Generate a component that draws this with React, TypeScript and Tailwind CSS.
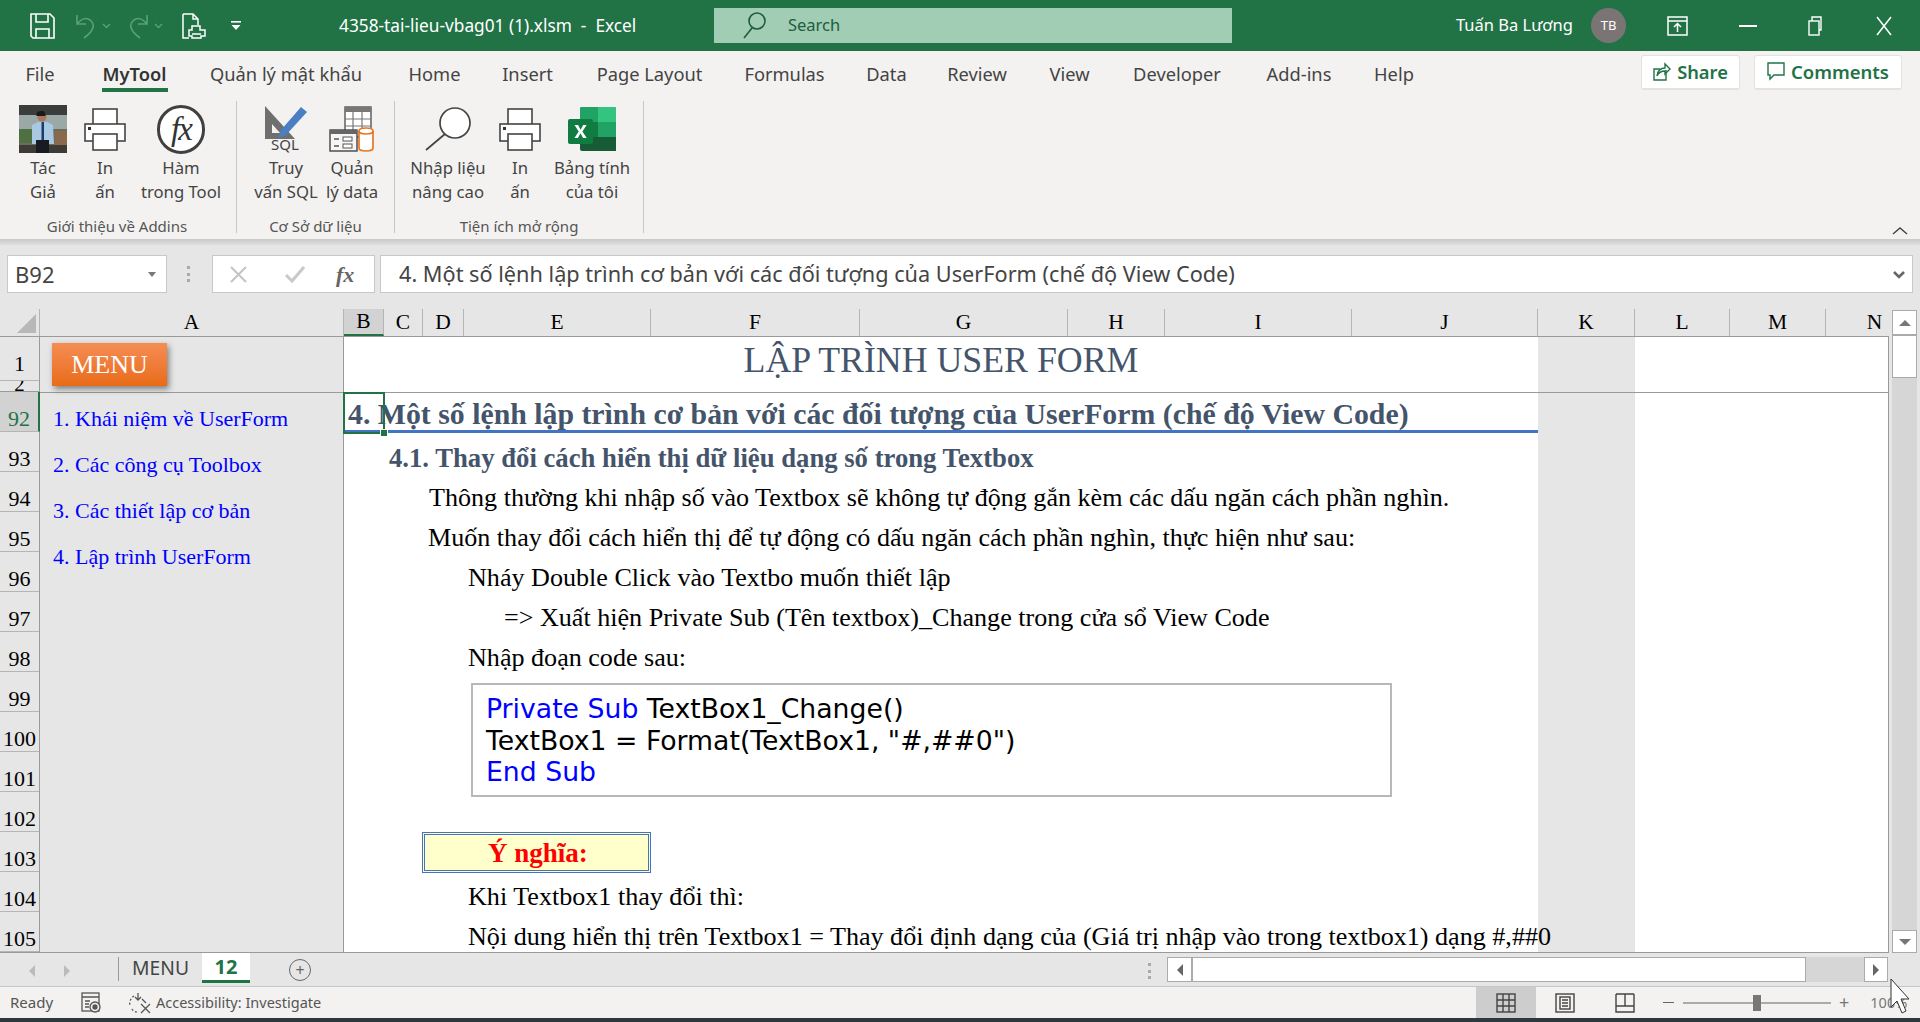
import React from "react";

const ui = "font-['Noto_Sans',sans-serif]";
const serif = "font-['Liberation_Serif',serif]";

function Save() {
  return (
    <svg width="25" height="26" viewBox="0 0 25 26" fill="none" stroke="#fff" strokeWidth="1.6">
      <path d="M1 1h19l4 4v20H3l-2-2z" />
      <path d="M6 1v8h12V1M6 25v-9h13v9" />
    </svg>
  );
}
function Undo({ flip }: { flip?: boolean }) {
  return (
    <svg width="22" height="26" viewBox="0 0 22 26" fill="none" stroke="#5c9f7d" strokeWidth="1.6" style={flip ? { transform: "scaleX(-1)" } : undefined}>
      <path d="M2 2v9h9M2 11c4-5 9-7 13-4 5 4 5 10-6 18" />
    </svg>
  );
}
function Chev() {
  return (
    <svg width="9" height="6" viewBox="0 0 9 6" fill="none" stroke="#5c9f7d" strokeWidth="1.3">
      <path d="M1 1l3.5 3.5L8 1" />
    </svg>
  );
}
function PrintPreview() {
  return (
    <svg width="24" height="26" viewBox="0 0 24 26" fill="none" stroke="#fff" strokeWidth="1.5">
      <path d="M1 1h10l5 5v6M1 1v24h6M11 1v5h5" />
      <path d="M10 13h8v4h5v6h-4v2h-9v-2H7v-6h3z" fill="#217346" />
      <path d="M10 21h9" />
    </svg>
  );
}
function QuickMore() {
  return (
    <svg width="12" height="12" viewBox="0 0 12 12" fill="#fff">
      <rect x="1" y="1" width="10" height="1.6" />
      <path d="M1.5 5h9L6 10z" />
    </svg>
  );
}
function SearchIcon({ color }: { color: string }) {
  return (
    <svg width="25" height="27" viewBox="0 0 25 27" fill="none" stroke={color} strokeWidth="1.6">
      <circle cx="15" cy="9" r="8" />
      <path d="M10 16L2 26" />
    </svg>
  );
}
function Printer() {
  return (
    <svg width="42" height="43" viewBox="0 0 42 43" fill="#fff" stroke="#444" strokeWidth="1.6">
      <rect x="9" y="1" width="24" height="16" />
      <rect x="1" y="16" width="40" height="17" />
      <rect x="9" y="26" width="24" height="16" />
      <rect x="4" y="19" width="3" height="3" fill="#333" stroke="none" />
    </svg>
  );
}
function Photo() {
  return (
    <svg width="48" height="48" viewBox="0 0 48 48">
      <rect width="48" height="48" fill="#6d6a5e" />
      <rect width="48" height="10" fill="#3a3d3c" />
      <rect y="10" width="48" height="14" fill="#9aa9a5" />
      <rect x="0" y="24" width="14" height="14" fill="#4f7040" />
      <rect x="36" y="26" width="12" height="14" fill="#8a6a4a" />
      <rect y="40" width="48" height="8" fill="#3e3a36" />
      <circle cx="23" cy="12" r="4.5" fill="#a9785c" />
      <path d="M22 6c-4 0-5 3-4.500 5h9c.5-3-1-5-4.500-5z" fill="#1c1a18" />
      <path d="M13 20l6-3h9l6 3 1 19h-5v-3H18v3h-5z" fill="#a9c9e2" />
      <rect x="17" y="35" width="13" height="13" fill="#1a1a22" />
      <rect x="22.500" y="17" width="2.500" height="18" fill="#1c3a6a" />
    </svg>
  );
}
function Fx() {
  return (
    <div className="w-[48px] h-[49px] rounded-full border-[3px] border-[#404040] bg-white flex items-center justify-center">
      <span className={`${serif} italic text-[33px] leading-none text-[#333] tracking-[-2px]`}>fx</span>
    </div>
  );
}
function Sql() {
  return (
    <div className="relative w-[44px] h-[46px]">
      <svg width="44" height="34" viewBox="0 0 44 34" className="absolute left-0 top-0">
        <path d="M1 0l30 33H1z" fill="#6f6f6f" />
        <path d="M8 18l8 9H8z" fill="#f3f2f1" />
        <path d="M37 1l6 5-21 23-8 3 3-8z" fill="#4a7fc4" />
      </svg>
      <span className={`${ui} absolute left-[7px] top-[31px] text-[15px] leading-[15px] text-[#444]`}>SQL</span>
    </div>
  );
}
function DataIcon() {
  return (
    <svg width="46" height="46" viewBox="0 0 46 46" fill="none">
      <rect x="16" y="1" width="26" height="30" fill="#fff" stroke="#555" strokeWidth="1.4" />
      <rect x="16" y="1" width="26" height="5" fill="#777" />
      <path d="M24 6v25M33 6v25M16 13h26M16 20h26" stroke="#777" strokeWidth="1.2" />
      <rect x="1" y="24" width="27" height="21" fill="#f6f6f6" stroke="#444" strokeWidth="1.4" />
      <rect x="1" y="24" width="27" height="4" fill="#666" />
      <path d="M5 33h5M5 40h5" stroke="#555" strokeWidth="1.4" />
      <rect x="14" y="31" width="9" height="4" fill="#fff" stroke="#555" />
      <rect x="14" y="38" width="9" height="4" fill="#fff" stroke="#555" />
      <path d="M30 25c0-4 14-4 14 0v17c0 4-14 4-14 0z" fill="#fff" stroke="#e8761f" strokeWidth="1.7" />
      <path d="M30 25c0 4 14 4 14 0" stroke="#e8761f" strokeWidth="1.7" />
    </svg>
  );
}
function Magnifier() {
  return (
    <svg width="46" height="44" viewBox="0 0 46 44" fill="#fff" stroke="#444" strokeWidth="1.7">
      <circle cx="30" cy="16" r="15" />
      <path d="M20 27L1 43" fill="none" />
    </svg>
  );
}
function ExcelLogo() {
  return (
    <svg width="48" height="44" viewBox="0 0 48 44">
      <rect x="12" y="0" width="36" height="44" rx="2" fill="#185c37" />
      <path d="M12 2a2 2 0 012-2h16v15H12z" fill="#21a366" />
      <path d="M30 0h16a2 2 0 012 2v13H30z" fill="#33c481" />
      <rect x="12" y="15" width="18" height="15" fill="#107c41" />
      <rect x="30" y="15" width="18" height="15" fill="#21a366" />
      <rect x="30" y="30" width="18" height="14" fill="#185c37" />
      <rect x="0" y="12" width="25" height="25" rx="2" fill="#107c41" />
      <path d="M6.500 18h3.600l2.500 4.700 2.600-4.700h3.400l-4.200 6.500 4.300 6.500h-3.600l-2.600-4.800-2.600 4.800H6.400l4.300-6.500z" fill="#fff" />
    </svg>
  );
}
function ShareIcon() {
  return (
    <svg width="18" height="20" viewBox="0 0 18 20" fill="none" stroke="#217346" strokeWidth="1.4">
      <path d="M13 8v10H1V7h6" />
      <path d="M4 14c0-5 4-8 8-8V2l5 5-5 5V9c-3 0-6 1-8 5z" />
    </svg>
  );
}
function CommentIcon() {
  return (
    <svg width="18" height="20" viewBox="0 0 18 20" fill="none" stroke="#217346" strokeWidth="1.4">
      <path d="M1 1h16v12H7l-4 4v-4H1z" />
    </svg>
  );
}

function RibbonItem({ w, icon, l1, l2 }: { w: string; icon: React.ReactNode; l1: string; l2: string }) {
  return (
    <div className={`${w} flex flex-col items-center shrink-0`}>
      <div className="h-[54px] flex items-center justify-center">{icon}</div>
      <div className="text-[16.7px] leading-[24px] text-[#444] whitespace-nowrap text-center">{l1}</div>
      <div className="text-[16.7px] leading-[24px] text-[#444] whitespace-nowrap text-center">{l2}</div>
    </div>
  );
}

const tabs = [
  { t: "File", c: "w-[30px] ml-[25px] text-[#444]" },
  { t: "MyTool", c: "w-[65px] ml-[47px] text-[#333] font-semibold" },
  { t: "Quản lý mật khẩu", c: "w-[152px] ml-[43px] text-[#444]" },
  { t: "Home", c: "w-[53px] ml-[46px] text-[#444]" },
  { t: "Insert", c: "w-[47px] ml-[43px] text-[#444]" },
  { t: "Page Layout", c: "w-[105px] ml-[46px] text-[#444]" },
  { t: "Formulas", c: "w-[81px] ml-[42px] text-[#444]" },
  { t: "Data", c: "w-[41px] ml-[41px] text-[#444]" },
  { t: "Review", c: "w-[60px] ml-[40px] text-[#444]" },
  { t: "View", c: "w-[41px] ml-[42px] text-[#444]" },
  { t: "Developer", c: "w-[90px] ml-[42px] text-[#444]" },
  { t: "Add-ins", c: "w-[70px] ml-[42px] text-[#444]" },
  { t: "Help", c: "w-[40px] ml-[40px] text-[#444]" },
];

const cols = [
  { l: "A", c: "w-[304px] border-r" },
  { l: "B", c: "w-[40px] border-r bg-[#d2d2d2] text-[#217346] border-b-2 border-b-[#217346]" },
  { l: "C", c: "w-[39px] border-r" },
  { l: "D", c: "w-[41px] border-r" },
  { l: "E", c: "w-[187px] border-r" },
  { l: "F", c: "w-[209px] border-r" },
  { l: "G", c: "w-[208px] border-r" },
  { l: "H", c: "w-[97px] border-r" },
  { l: "I", c: "w-[187px] border-r" },
  { l: "J", c: "w-[186px] border-r" },
  { l: "K", c: "w-[97px] border-r" },
  { l: "L", c: "w-[95px] border-r" },
  { l: "M", c: "w-[96px] border-r" },
  { l: "N", c: "w-[63px] pl-[34px]" },
];

const rowNums = [93, 94, 95, 96, 97, 98, 99, 100, 101, 102, 103, 104, 105];

const menu = ["1. Khái niệm về UserForm", "2. Các công cụ Toolbox", "3. Các thiết lập cơ bản", "4. Lập trình UserForm"];

function BodyRow({ pl, children }: { pl: string; children: React.ReactNode }) {
  return (
    <div className={`h-[40px] pt-[10px] flex items-center whitespace-nowrap text-[26.1px] text-black ${pl}`}>{children}</div>
  );
}

export default function App() {
  return (
    <div className={`${ui} w-[1920px] h-[1022px] flex flex-col overflow-hidden bg-[#e6e6e6] relative`}>
      {/* Title bar */}
      <div className="h-[51px] bg-[#217346] flex items-center shrink-0 text-white">
        <div className="ml-[30px] flex items-center"><Save /></div>
        <div className="ml-[20px] flex items-center gap-[5px]"><Undo /><Chev /></div>
        <div className="ml-[16px] flex items-center gap-[5px]"><Undo flip /><Chev /></div>
        <div className="ml-[19px]"><PrintPreview /></div>
        <div className="ml-[24px]"><QuickMore /></div>
        <div className="ml-[97px] w-[297px] text-[17.3px] whitespace-nowrap">4358-tai-lieu-vbag01 (1).xlsm&nbsp; -&nbsp; Excel</div>
        <div className="ml-[78px] w-[518px] h-[35px] bg-[#a0cdb4] flex items-center pl-[28px]">
          <SearchIcon color="#1d5c39" />
          <span className="ml-[21px] text-[16.5px] text-[#235c3c]">Search</span>
        </div>
        <div className="ml-[224px] w-[120px] text-[16.5px] whitespace-nowrap">Tuấn Ba Lương</div>
        <div className="ml-[15px] w-[35px] h-[35px] rounded-full bg-[#7a7574] flex items-center justify-center text-[13px]">TB</div>
        <div className="ml-[41px]">
          <svg width="21" height="20" viewBox="0 0 21 20" fill="none" stroke="#fff" strokeWidth="1.5">
            <rect x="1" y="1" width="19" height="18" />
            <path d="M1 5h19M10.500 16V8M7 11l3.500-3.500L14 11" />
          </svg>
        </div>
        <div className="ml-[51px] w-[18px] h-[2px] bg-white" />
        <div className="ml-[51px]">
          <svg width="14" height="20" viewBox="0 0 14 20" fill="none" stroke="#fff" strokeWidth="1.4">
            <rect x="1" y="5" width="10" height="14" />
            <path d="M4 5V1h9v13h-2" />
          </svg>
        </div>
        <div className="ml-[54px]">
          <svg width="16" height="20" viewBox="0 0 16 20" fill="none" stroke="#fff" strokeWidth="1.5">
            <path d="M1 1l14 18M15 1L1 19" />
          </svg>
        </div>
      </div>

      {/* Ribbon */}
      <div className="h-[188px] bg-[#f3f2f1] shrink-0 flex flex-col relative">
        <div className="h-[50px] flex items-center shrink-0 relative">
          {tabs.map((t) => (
            <div key={t.t} className={`${t.c} shrink-0 text-[18.3px] pb-[4px] whitespace-nowrap flex justify-center`}>{t.t}</div>
          ))}
          <div className="absolute left-[102px] top-[37px] w-[66px] h-[4px] bg-[#217346]" />
          <div className="absolute left-[1641px] top-[4px] w-[99px] h-[35px] bg-white rounded-[3px] border border-[#e3e2e1] border-b-2 flex items-center justify-center gap-[6px] text-[#217346] text-[18.300px] font-semibold">
            <ShareIcon /><span>Share</span>
          </div>
          <div className="absolute left-[1754px] top-[4px] w-[148px] h-[35px] bg-white rounded-[3px] border border-[#e3e2e1] border-b-2 flex items-center justify-center gap-[6px] text-[#217346] text-[18.500px] font-semibold">
            <CommentIcon /><span>Comments</span>
          </div>
        </div>
        <div className="flex h-[132px] items-start">
          <div className="w-[237px] h-full border-r border-[#c8c6c4] flex flex-col shrink-0">
            <div className="flex pl-[14px] h-[108px] pt-[1px]">
              <RibbonItem w="w-[58px]" icon={<Photo />} l1="Tác" l2="Giả" />
              <RibbonItem w="w-[66px]" icon={<Printer />} l1="In" l2="ấn" />
              <RibbonItem w="w-[86px]" icon={<Fx />} l1="Hàm" l2="trong Tool" />
            </div>
            <div className="text-center text-[15px] text-[#555] mt-[11px] pr-[2px]">Giới thiệu về Addins</div>
          </div>
          <div className="w-[158px] h-full border-r border-[#c8c6c4] flex flex-col shrink-0">
            <div className="flex pl-[14px] h-[108px] pt-[1px]">
              <RibbonItem w="w-[70px]" icon={<Sql />} l1="Truy" l2="vấn SQL" />
              <RibbonItem w="w-[62px]" icon={<DataIcon />} l1="Quản" l2="lý data" />
            </div>
            <div className="text-center text-[15px] text-[#555] mt-[11px]">Cơ Sở dữ liệu</div>
          </div>
          <div className="w-[249px] h-full border-r border-[#c8c6c4] flex flex-col shrink-0">
            <div className="flex pl-[13px] h-[108px] pt-[1px]">
              <RibbonItem w="w-[80px]" icon={<Magnifier />} l1="Nhập liệu" l2="nâng cao" />
              <RibbonItem w="w-[64px]" icon={<Printer />} l1="In" l2="ấn" />
              <RibbonItem w="w-[80px]" icon={<ExcelLogo />} l1="Bảng tính" l2="của tôi" />
            </div>
            <div className="text-center text-[15px] text-[#555] mt-[11px]">Tiện ích mở rộng</div>
          </div>
        </div>
        <svg width="16" height="10" viewBox="0 0 16 10" fill="none" stroke="#444" strokeWidth="1.4" className="absolute right-[12px] bottom-[3px]">
          <path d="M1 8l7-6 7 6" />
        </svg>
      </div>
      <div className="h-[6px] bg-gradient-to-b from-[#c9c9c9] to-[#e0e0e0] shrink-0" />

      {/* Formula bar */}
      <div className="h-[64px] shrink-0 pt-[10px] pl-[7px] flex items-start">
        <div className="w-[160px] h-[38px] bg-white border border-[#c8c8c8] flex items-center pl-[7px] relative text-[22px] text-[#444]">
          B92
          <svg width="8" height="5" viewBox="0 0 8 5" fill="#777" className="absolute right-[10px] top-[16px]"><path d="M0 0h8L4 5z" /></svg>
        </div>
        <div className="ml-[20px] w-[3px] h-[16px] mt-[11px] border-l-[3px] border-dotted border-[#aaa]" />
        <div className="ml-[22px] w-[163px] h-[38px] bg-white border border-[#c8c8c8] flex items-center relative">
          <svg width="17" height="17" viewBox="0 0 17 17" fill="none" stroke="#c4c4c4" strokeWidth="2" className="ml-[17px]"><path d="M1 1l15 15M16 1L1 16" /></svg>
          <svg width="20" height="17" viewBox="0 0 20 17" fill="none" stroke="#c9c9c9" strokeWidth="3" className="ml-[38px]"><path d="M1 9l6 6L19 1" /></svg>
          <span className={`${serif} italic font-bold ml-[31px] text-[22px] text-[#666]`}>fx</span>
        </div>
        <div className="ml-[5px] w-[1533px] h-[38px] bg-white border border-[#c8c8c8] flex items-center pl-[18px] text-[21.7px] text-[#444] relative whitespace-nowrap">
          4. Một số lệnh lập trình cơ bản với các đối tượng của UserForm (chế độ View Code)
          <svg width="12" height="8" viewBox="0 0 12 8" fill="none" stroke="#666" strokeWidth="2.6" className="absolute right-[7px] top-[15px]"><path d="M1 1l5 5 5-5" /></svg>
        </div>
      </div>

      {/* Sheet */}
      <div className={`${serif} flex h-[644px] shrink-0 relative`}>
        <div className="w-[1889px] shrink-0 flex flex-col relative">
          {/* Column headers */}
          <div className="h-[28px] flex shrink-0 border-b border-[#9a9a9a]">
            <div className="w-[40px] shrink-0 border-r border-[#b5b5b5] flex items-end justify-end pr-[3px] pb-[3px]">
              <div className="w-0 h-0 border-l-[19px] border-l-transparent border-b-[19px] border-b-[#b8b8b8]" />
            </div>
            {cols.map((c) => (
              <div key={c.l} className={`${c.c} shrink-0 flex items-center justify-center border-[#b5b5b5] text-[21.5px] text-black`}>{c.l}</div>
            ))}
          </div>
          <div className="flex h-[616px] border-b border-[#9a9a9a]">
            {/* Row headers */}
            <div className="w-[40px] shrink-0 border-r border-[#9a9a9a] flex flex-col text-[22px] text-black">
              <div className="h-[45px] flex items-center justify-center pt-[10px] border-b border-[#b5b5b5]">1</div>
              <div className="h-[11px] overflow-hidden flex justify-center text-[21px] leading-[6px] border-b border-[#9a9a9a]">2</div>
              <div className="h-[40px] flex items-center justify-center pt-[14px] bg-[#d2d2d2] text-[#217346] border-r-2 border-r-[#217346] border-b border-[#b5b5b5] -mr-px">92</div>
              {rowNums.map((n) => (
                <div key={n} className="h-[40px] flex items-center justify-center pt-[14px] border-b border-[#b5b5b5]">{n}</div>
              ))}
            </div>
            {/* Column A */}
            <div className="w-[304px] shrink-0 border-r border-[#9a9a9a] bg-[#e6e6e6]">
              <div className="h-[56px] border-b border-[#9a9a9a] pl-[12px] pt-[6px]">
                <div className="w-[115px] h-[43px] bg-gradient-to-b from-[#f58d52] to-[#e96b13] shadow-[2px_3px_6px_rgba(0,0,0,0.45)] flex items-center justify-center text-white text-[26px]">MENU</div>
              </div>
              <div className="pl-[13px] pt-[2px] flex flex-col text-[22px] text-[#0000ff] whitespace-nowrap">
                {menu.map((m) => (
                  <div key={m} className="h-[46px] flex items-center">{m}</div>
                ))}
              </div>
            </div>
            {/* Content columns B-J */}
            <div className="w-[1194px] shrink-0 bg-white relative z-10">
              <div className="h-[56px] border-b border-[#9a9a9a] flex items-center justify-center pb-[7px] text-[35.8px] text-[#44546a]">LẬP TRÌNH USER FORM</div>
              <div className="h-[41px] -mt-px border-b-[3px] border-[#4472c4] flex items-center pl-[4px] pt-[6px] font-bold text-[29.8px] text-[#44546a] whitespace-nowrap">
                <span>4. Một số lệnh lập trình cơ bản với các đối tượng của UserForm (chế độ View Code)</span>
              </div>
              <div className="h-[40px] pt-[10px] flex items-center pl-[45px] font-bold text-[26.7px] text-[#44546a] whitespace-nowrap">4.1. Thay đổi cách hiển thị dữ liệu dạng số trong Textbox</div>
              <BodyRow pl="pl-[85px]">Thông thường khi nhập số vào Textbox sẽ không tự động gắn kèm các dấu ngăn cách phần nghìn.</BodyRow>
              <BodyRow pl="pl-[84px]">Muốn thay đổi cách hiển thị để tự động có dấu ngăn cách phần nghìn, thực hiện như sau:</BodyRow>
              <BodyRow pl="pl-[124px]">Nháy Double Click vào Textbo muốn thiết lập</BodyRow>
              <BodyRow pl="pl-[160px]">=&gt; Xuất hiện Private Sub (Tên textbox)_Change trong cửa sổ View Code</BodyRow>
              <BodyRow pl="pl-[124px]">Nhập đoạn code sau:</BodyRow>
              <div className="h-[160px] pt-[10px] pl-[127px]">
                <div className="w-[921px] h-[114px] border-2 border-[#b8b8b8] pl-[13px] pt-[8px] font-['DejaVu_Sans',sans-serif] text-[26.7px] leading-[31.5px] text-black whitespace-nowrap">
                  <div><span className="text-[#0000ff]">Private Sub</span> TextBox1_Change()</div>
                  <div>TextBox1 = Format(TextBox1, "#,##0")</div>
                  <div className="text-[#0000ff]">End Sub</div>
                </div>
              </div>
              <div className="h-[40px] pl-[78px]">
                <div className="w-[229px] h-[41px] -mt-px border-[3px] border-double border-[#4472c4] bg-[#ffffcc] flex items-center pl-[63px] pt-[2px] font-bold text-[27px] text-[#ff0000]">Ý nghĩa:</div>
              </div>
              <BodyRow pl="pl-[124px]">Khi Textbox1 thay đổi thì:</BodyRow>
              <BodyRow pl="pl-[124px]">Nội dung hiển thị trên Textbox1 = Thay đổi định dạng của (Giá trị nhập vào trong textbox1) dạng #,##0</BodyRow>
            </div>
            {/* K */}
            <div className="w-[97px] shrink-0 bg-[#e6e6e6]">
              <div className="h-[56px] border-b border-[#9a9a9a]" />
            </div>
            {/* L-N */}
            <div className="flex-1 bg-white border-r border-[#9a9a9a]">
              <div className="h-[56px] border-b border-[#9a9a9a]" />
            </div>
          </div>
          {/* selected cell overlay */}
          <div className="absolute left-[343px] top-[83px] w-[42px] h-[42px] border-2 border-[#217346] z-20">
            <div className="absolute right-[-5px] bottom-[-5px] w-[8px] h-[8px] bg-[#217346] border border-white" />
          </div>
        </div>
        {/* Vertical scrollbar */}
        <div className="flex-1 pl-[3px] pr-[3px] pt-[1px]">
          <div className="w-[25px] h-[643px] bg-[#d6d6d6] flex flex-col">
            <div className="h-[25px] bg-white border border-[#ababab] flex items-center justify-center">
              <div className="w-0 h-0 border-x-[6px] border-x-transparent border-b-[6px] border-b-[#777]" />
            </div>
            <div className="h-[43px] bg-white border border-[#ababab]" />
            <div className="flex-1" />
            <div className="h-[23px] bg-white border border-[#ababab] flex items-center justify-center">
              <div className="w-0 h-0 border-x-[6px] border-x-transparent border-t-[6px] border-t-[#777]" />
            </div>
          </div>
        </div>
      </div>

      {/* Sheet tabs */}
      <div className="h-[34px] shrink-0 flex items-start border-b border-[#c6c6c6]">
        <div className="ml-[29px] mt-[12px] w-0 h-0 border-y-[6px] border-y-transparent border-r-[6px] border-r-[#bbb]" />
        <div className="ml-[29px] mt-[12px] w-0 h-0 border-y-[6px] border-y-transparent border-l-[6px] border-l-[#bbb]" />
        <div className="ml-[48px] mt-[4px] w-px h-[24px] bg-[#999]" />
        <div className="w-[83px] h-[30px] flex items-center justify-center text-[19.3px] text-[#444] shrink-0">MENU</div>
        <div className="w-[48px] h-[30px] bg-white border-b-[3px] border-[#217346] flex items-center justify-center text-[20px] font-bold text-[#217346] shrink-0">12</div>
        <div className="ml-[39px] mt-[6px] w-[22px] h-[22px] rounded-full border border-[#666] flex items-center justify-center text-[#666] text-[16px] leading-none">+</div>
        <div className="ml-[837px] mt-[10px] h-[16px] border-l-[3px] border-dotted border-[#aaa]" />
        <div className="ml-[16px] mt-[4px] w-[721px] h-[25px] bg-[#d6d6d6] flex">
          <div className="w-[25px] bg-white border border-[#ababab] flex items-center justify-center">
            <div className="w-0 h-0 border-y-[6px] border-y-transparent border-r-[6px] border-r-[#666]" />
          </div>
          <div className="w-[614px] bg-white border border-[#ababab]" />
          <div className="flex-1" />
          <div className="w-[24px] bg-white border border-[#ababab] flex items-center justify-center">
            <div className="w-0 h-0 border-y-[6px] border-y-transparent border-l-[6px] border-l-[#666]" />
          </div>
        </div>
      </div>

      {/* Status bar */}
      <div className="h-[31px] shrink-0 bg-[#f3f2f1] flex items-center text-[15px] text-[#555] whitespace-nowrap">
        <span className="ml-[10px] w-[42px]">Ready</span>
        <svg width="22" height="22" viewBox="0 0 22 22" fill="none" stroke="#555" strokeWidth="1.3" className="ml-[29px]">
          <rect x="1" y="1" width="17" height="18" />
          <path d="M1 5h17M4 9h5M4 12h4M4 15h4" />
          <circle cx="14" cy="15" r="5" fill="#f3f2f1" />
          <circle cx="14" cy="15" r="2" fill="#555" />
        </svg>
        <svg width="24" height="22" viewBox="0 0 24 22" fill="none" stroke="#555" strokeWidth="1.3" className="ml-[25px]">
          <path d="M10 1v6M7 5l3 3 3-3" />
          <path d="M6 4a9 9 0 00-4 10M4 17c1 2 3 3 6 3" strokeDasharray="2 2" />
          <path d="M13 12l9 9M22 12l-9 9M14 7l4 4" />
        </svg>
        <span className="ml-[4px] w-[172px] text-[14.5px]">Accessibility: Investigate</span>
        <div className="ml-[1148px] w-[60px] h-[31px] bg-[#cdcdcd] flex items-center justify-center">
          <svg width="20" height="20" viewBox="0 0 20 20" fill="none" stroke="#444" strokeWidth="1.4">
            <rect x="1" y="1" width="18" height="18" />
            <path d="M7 1v18M13 1v18M1 7h18M1 13h18" />
          </svg>
        </div>
        <svg width="20" height="20" viewBox="0 0 20 20" fill="none" stroke="#444" strokeWidth="1.4" className="ml-[19px]">
          <rect x="1" y="1" width="18" height="18" />
          <rect x="5" y="4" width="10" height="12" />
          <path d="M7 7h6M7 10h6M7 13h6" />
        </svg>
        <svg width="20" height="20" viewBox="0 0 20 20" fill="none" stroke="#444" strokeWidth="1.4" className="ml-[40px]">
          <path d="M1 1v18h18V1M1 13h18M10 1v12M1 1h18" />
        </svg>
        <div className="ml-[28px] w-[11px] h-[1.5px] bg-[#666]" />
        <div className="ml-[9px] w-[148px] h-[2px] bg-[#aaa] relative">
          <div className="absolute left-[70px] top-[-7px] w-[8px] h-[16px] bg-[#777]" />
        </div>
        <span className="ml-[8px] text-[18px] text-[#777]">+</span>
        <span className="ml-[21px] text-[14.500px] text-[#777]">100%</span>
      </div>
      <div className="flex-1 bg-[#2c3a3e]" />

      {/* Mouse cursor */}
      <svg width="20" height="38" viewBox="0 0 20 38" className="absolute left-[1890px] top-[978px] z-30" fill="#fff" stroke="#333" strokeWidth="1">
        <path d="M1 1v28l6-6 5 12 4-2-5-12h8z" />
      </svg>
    </div>
  );
}
